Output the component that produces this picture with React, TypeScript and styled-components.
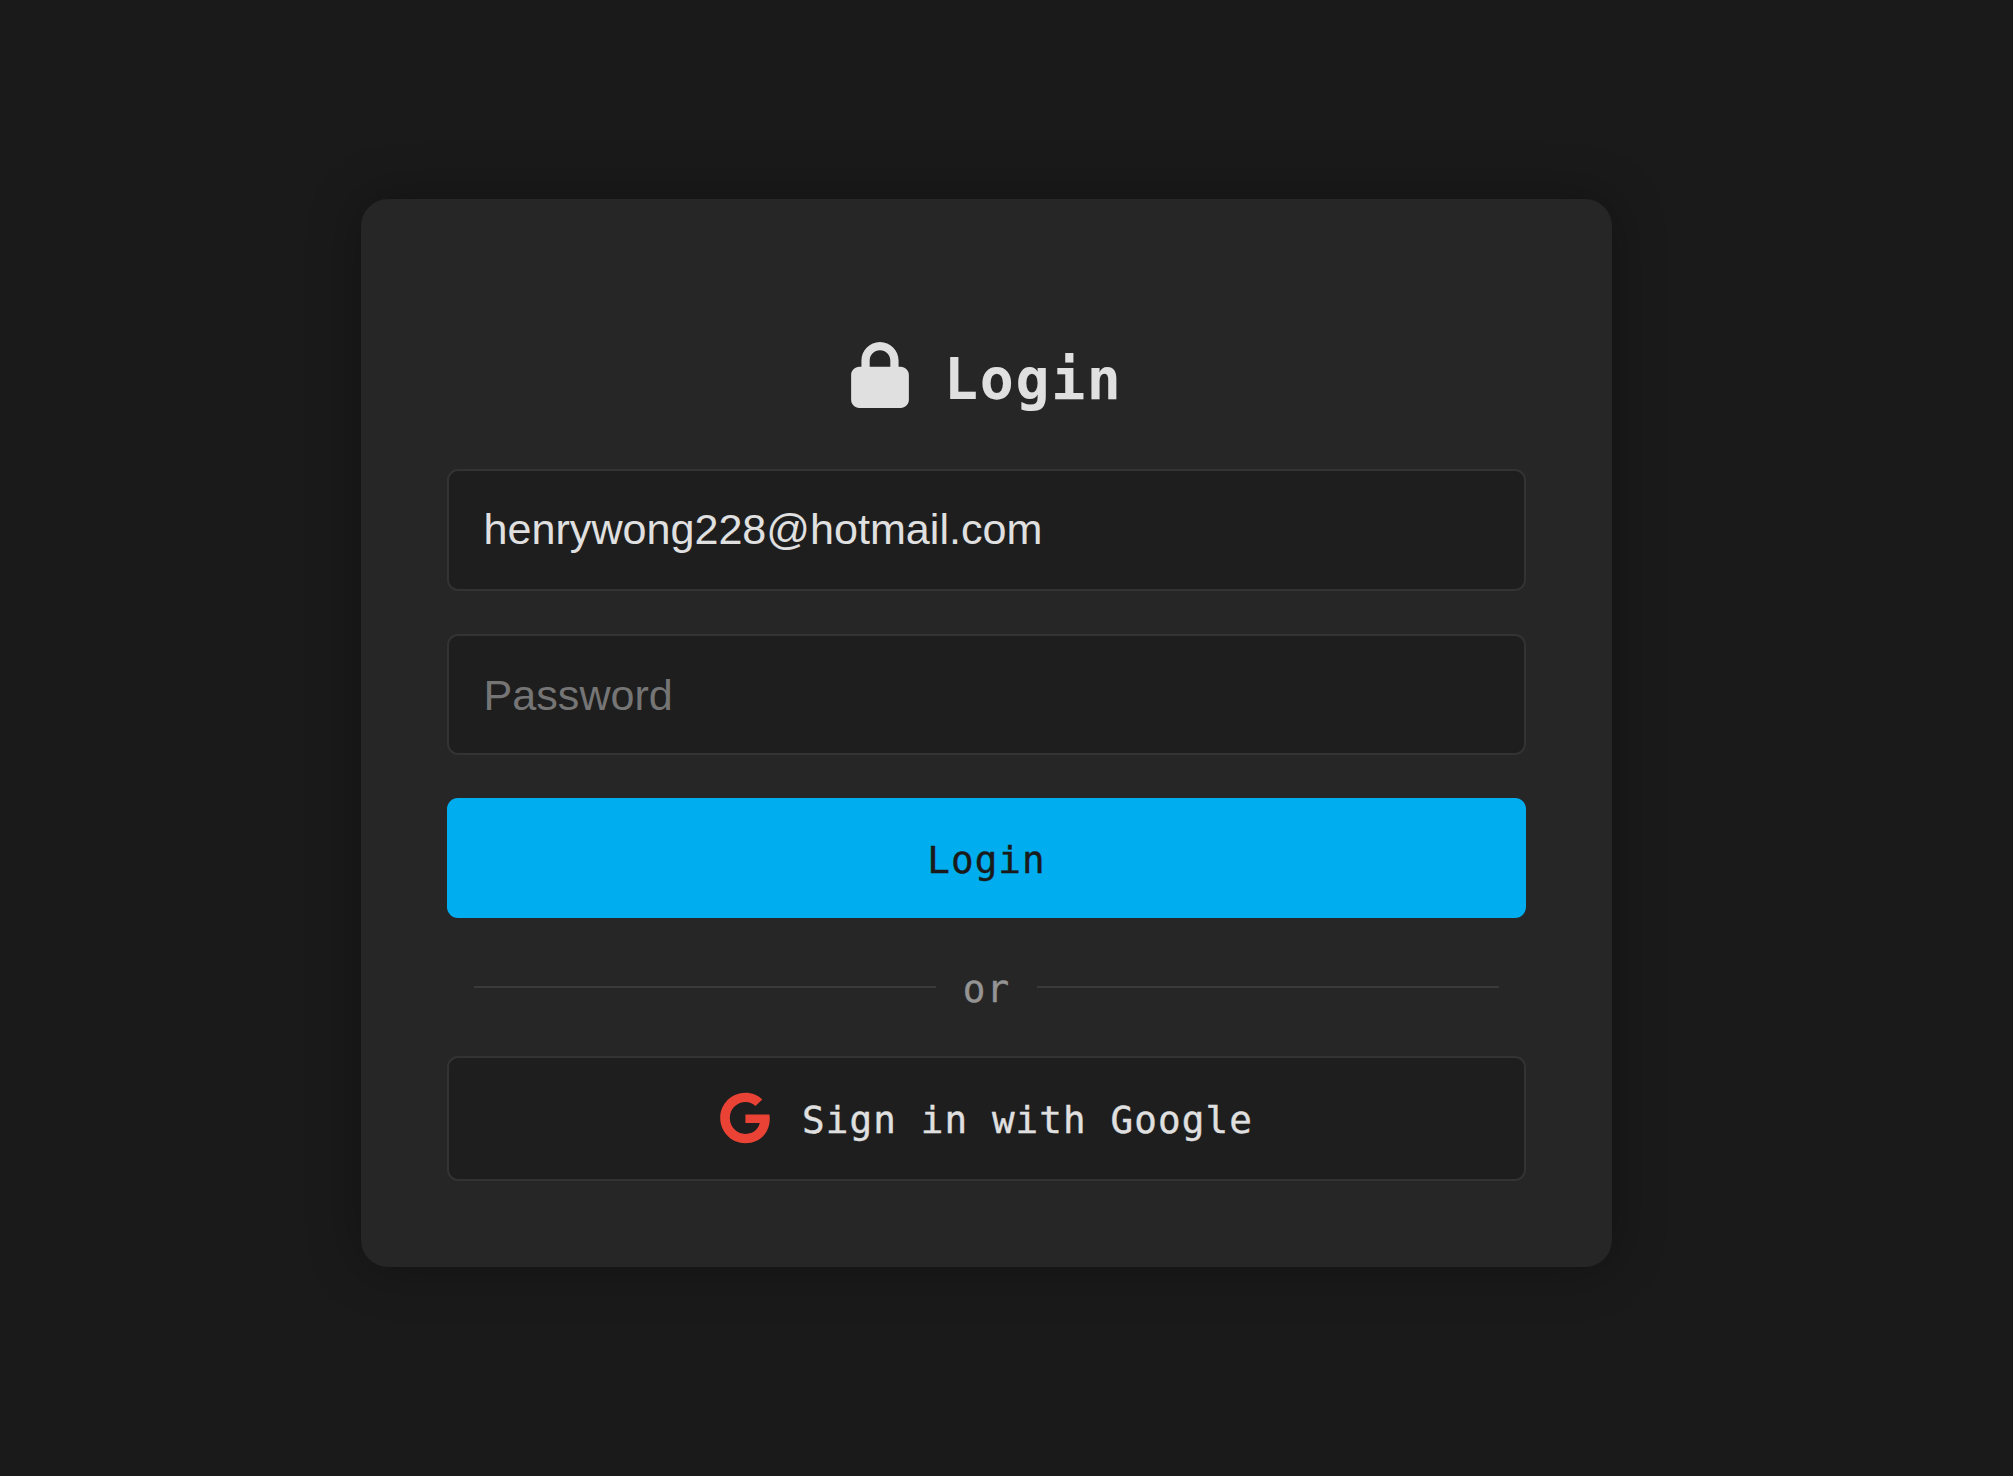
import React from 'react';
import styled, { createGlobalStyle } from 'styled-components';
import { FaGoogle, FaLock } from 'react-icons/fa6';

const mono = `"DejaVu Sans Mono", monospace`;

const GlobalStyle = createGlobalStyle`
  * { box-sizing: border-box; }
  body { margin: 0; background: #1a1a1a; overflow: hidden; }
`;

const Page = styled.main`
  min-height: 1476px;
  padding: 199px 0 0 361px;
  font-family: ${mono};
  color: #e0e0e0;
`;

const Card = styled.form`
  display: flex;
  flex-direction: column;
  width: 1251px;
  height: 1068px;
  padding: 134px 86px 86px;
  border-radius: 27px;
  background: #262626;
  box-shadow: 0 0 54px rgba(0, 0, 0, 0.3);
`;

const Heading = styled.h1`
  display: flex;
  align-items: flex-start;
  height: 136px;
  margin: 0;
  padding: 9px 0 0 404px;
  font-size: 56.5px;
  line-height: 76px;
  letter-spacing: 1.7px;
  gap: 35px;

  svg {
    width: 58px;
    height: 66px;
  }
`;

const Field = styled.input<{ $height: number; $padding: string }>`
  width: 100%;
  height: ${(p) => p.$height}px;
  padding: ${(p) => p.$padding};
  border: 2px solid #333;
  border-radius: 11px;
  background: #1e1e1e;
  color: #e0e0e0;
  font: 43.1px "Liberation Sans", Arial, sans-serif;
  outline: none;
  margin-bottom: 43px;

  &::placeholder {
    color: #757575;
    opacity: 1;
  }
`;

const Button = styled.button<{ $primary?: boolean }>`
  display: flex;
  align-items: center;
  justify-content: center;
  gap: 32px;
  height: ${(p) => (p.$primary ? 120 : 125)}px;
  padding: 0 0 2px;
  border: ${(p) => (p.$primary ? '0' : '2px solid #333')};
  border-radius: 11px;
  background: ${(p) => (p.$primary ? '#00aeef' : '#1e1e1e')};
  color: ${(p) => (p.$primary ? '#1a1a1a' : '#e0e0e0')};
  font: 37.6px ${mono};
  letter-spacing: 1.1px;
  -webkit-text-stroke: 0.4px currentColor;

  svg {
    width: 50px;
    height: 52px;
    color: #ea4335;
  }
`;

const ButtonLabel = styled.span`
  padding-top: 5px;
`;

const Divider = styled.div`
  display: flex;
  align-items: center;
  height: 138px;
  padding: 0 27px;
  font-size: 37.6px;
  letter-spacing: 1.1px;
  color: #949494;
  -webkit-text-stroke: 0.4px currentColor;

  &::before,
  &::after {
    content: '';
    flex: 1;
    height: 2px;
    background: #3a3a3a;
  }
`;

const DividerLabel = styled.span`
  width: 101px;
  padding-top: 4px;
  text-align: center;
`;

export default function App() {
  return (
    <Page>
      <GlobalStyle />
      <Card onSubmit={(e: React.FormEvent) => e.preventDefault()}>
        <Heading>
          <FaLock />
          <span>Login</span>
        </Heading>
        <Field
          $height={122}
          $padding="0 34px 2px 34.6px"
          type="text"
          defaultValue="henrywong228@hotmail.com"
          aria-label="Email"
        />
        <Field $height={121} $padding="2px 34px 0 34.6px" type="password" placeholder="Password" />
        <Button $primary>
          <ButtonLabel>Login</ButtonLabel>
        </Button>
        <Divider>
          <DividerLabel>or</DividerLabel>
        </Divider>
        <Button type="button">
          <FaGoogle />
          <ButtonLabel>Sign in with Google</ButtonLabel>
        </Button>
      </Card>
    </Page>
  );
}
